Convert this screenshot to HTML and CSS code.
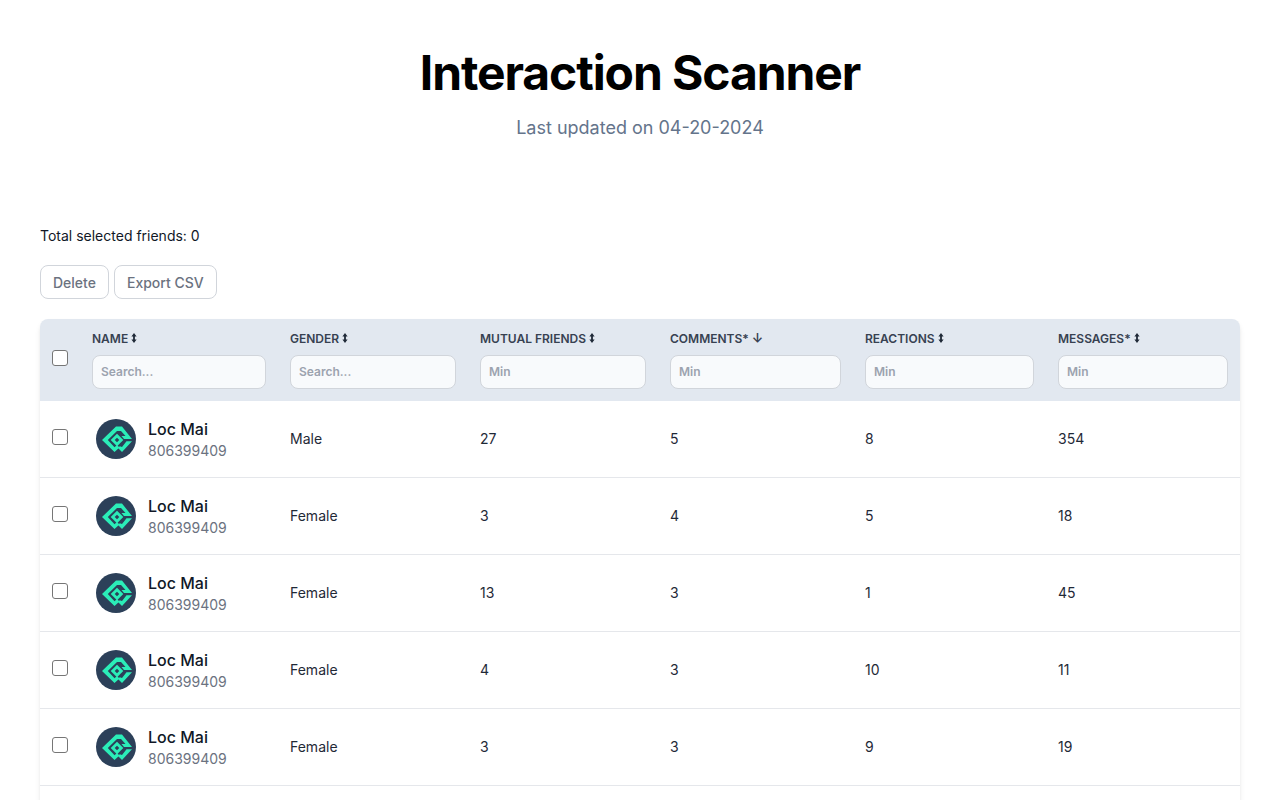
FILE: index.html
```html
<!DOCTYPE html>
<html lang="en">
<head>
	<meta charset="UTF-8">
	<title>Interaction Scanner</title>
	<link rel="stylesheet" href="styles.css">
</head>
<body>
	<svg class="defs" width="0" height="0" aria-hidden="true">
		<symbol id="logo" viewBox="0 0 40 40">
			<circle cx="20" cy="20" r="20" fill="#2c4059"/>
			<g fill="#2bedb8">
				<path d="M20 7.500L6 21L18.500 33L23.500 28.500L21 26L18.500 28.300L11.800 21L21 12H25L29.500 17H25.500L28 20H36L26 7.500Z"/>
				<path d="M30.500 22.300H36L26 33L22 29L23.800 27.300L26 28Z"/>
				<path d="M21 14.700L27.300 21L21 27.300L14.700 21ZM21 18.700L18.700 21L21 23.300L23.300 21Z" fill-rule="evenodd"/>
			</g>
		</symbol>
		<symbol id="sort" viewBox="0 0 6 10">
			<path d="M3 0L5.600 3.400H3.900V6.600H5.600L3 10L.4 6.600H2.100V3.400H.4Z" fill="#1f2937"/>
		</symbol>
	</svg>

	<header class="top">
		<h1>Interaction Scanner</h1>
		<p>Last updated on 04-20-2024</p>
	</header>

	<main class="page">
		<div class="total">Total selected friends: 0</div>
		<div class="actions">
			<button class="btn">Delete</button>
			<button class="btn">Export CSV</button>
		</div>

		<table class="friends">
			<colgroup>
				<col class="c-check"><col class="c-name"><col class="c-gender"><col class="c-mutual"><col class="c-comments"><col class="c-reactions"><col class="c-messages">
			</colgroup>
			<thead>
				<tr>
					<th class="check"><input type="checkbox"></th>
					<th><div class="label">NAME <svg class="sort"><use href="#sort"/></svg></div><input class="filter" placeholder="Search..."></th>
					<th><div class="label">GENDER <svg class="sort"><use href="#sort"/></svg></div><input class="filter" placeholder="Search..."></th>
					<th><div class="label">MUTUAL FRIENDS <svg class="sort"><use href="#sort"/></svg></div><input class="filter" placeholder="Min"></th>
					<th><div class="label">COMMENTS* <span class="arrow">↓</span></div><input class="filter" placeholder="Min"></th>
					<th><div class="label">REACTIONS <svg class="sort"><use href="#sort"/></svg></div><input class="filter" placeholder="Min"></th>
					<th><div class="label">MESSAGES* <svg class="sort"><use href="#sort"/></svg></div><input class="filter" placeholder="Min"></th>
				</tr>
			</thead>
			<tbody>
				<tr>
					<td class="check"><input type="checkbox"></td>
					<td><div class="person"><svg class="avatar"><use href="#logo"/></svg><div><div class="who">Loc Mai</div><div class="uid">806399409</div></div></div></td>
					<td>Male</td><td>27</td><td>5</td><td>8</td><td>354</td>
				</tr>
				<tr>
					<td class="check"><input type="checkbox"></td>
					<td><div class="person"><svg class="avatar"><use href="#logo"/></svg><div><div class="who">Loc Mai</div><div class="uid">806399409</div></div></div></td>
					<td>Female</td><td>3</td><td>4</td><td>5</td><td>18</td>
				</tr>
				<tr>
					<td class="check"><input type="checkbox"></td>
					<td><div class="person"><svg class="avatar"><use href="#logo"/></svg><div><div class="who">Loc Mai</div><div class="uid">806399409</div></div></div></td>
					<td>Female</td><td>13</td><td>3</td><td>1</td><td>45</td>
				</tr>
				<tr>
					<td class="check"><input type="checkbox"></td>
					<td><div class="person"><svg class="avatar"><use href="#logo"/></svg><div><div class="who">Loc Mai</div><div class="uid">806399409</div></div></div></td>
					<td>Female</td><td>4</td><td>3</td><td>10</td><td>11</td>
				</tr>
				<tr>
					<td class="check"><input type="checkbox"></td>
					<td><div class="person"><svg class="avatar"><use href="#logo"/></svg><div><div class="who">Loc Mai</div><div class="uid">806399409</div></div></div></td>
					<td>Female</td><td>3</td><td>3</td><td>9</td><td>19</td>
				</tr>
				<tr>
					<td colspan="7"></td>
				</tr>
			</tbody>
		</table>
	</main>
</body>
</html>
```

FILE: styles.css
```css
body{
	margin:0;
	font-family:Inter,"Liberation Sans",sans-serif;
	color:#1f2937;
	background:#fff;
}
.defs{
	position:absolute;
}
.top{
	padding-top:49px;
	text-align:center;
}
.top h1{
	margin:0;
	font-size:48px;
	line-height:48px;
	font-weight:700;
	letter-spacing:-1.100px;
	color:#000;
}
.top p{
	margin:17px 0 0;
	font-size:18px;
	line-height:28px;
	color:#64748b;
}
.page{
	padding:84px 40px 0;
}
.total{
	font-size:14px;
	line-height:20px;
	color:#111827;
}
.actions{
	display:flex;
	gap:5px;
	margin-top:19px;
}
.btn{
	height:34px;
	padding:0 12px;
	border:1px solid #d1d5db;
	border-radius:8px;
	background:#fff;
	font-family:inherit;
	font-size:14px;
	font-weight:500;
	color:#6b7280;
}
.friends{
	width:1200px;
	margin-top:20px;
	table-layout:fixed;
	border-collapse:separate;
	border-spacing:0;
	font-size:14px;
	box-shadow:0 4px 6px -1px rgba(0,0,0,.1),0 2px 4px -2px rgba(0,0,0,.1);
	border-radius:8px 8px 0 0;
}
.c-check{width:40px;}
.c-name{width:198px;}
.c-gender{width:190px;}
.c-mutual{width:190px;}
.c-comments{width:195px;}
.c-reactions{width:193px;}
.c-messages{width:194px;}
.friends th{
	height:82px;
	padding:0 12px;
	box-sizing:border-box;
	background:#e2e8f0;
	text-align:left;
	vertical-align:top;
}
.friends th:first-child{border-radius:8px 0 0 0;}
.friends th:last-child{border-radius:0 8px 0 0;}
.label{
	display:flex;
	align-items:center;
	gap:3px;
	height:16px;
	margin-top:11px;
	font-size:12px;
	font-weight:600;
	color:#374151;
	white-space:nowrap;
}
.sort{
	width:6px;
	height:10px;
}
.arrow{
	font-size:13px;
}
.filter{
	display:block;
	box-sizing:border-box;
	width:100%;
	height:34px;
	margin-top:9px;
	padding:0 8px 2px;
	border:1px solid #d1d5db;
	border-radius:8px;
	background:#f8fafc;
	font-family:inherit;
	font-size:12px;
	font-weight:600;
}
.filter::placeholder{
	color:#9ca3af;
}
.friends th.check{
	vertical-align:middle;
	padding:0 0 4px 12px;
}
input[type=checkbox]{
	display:block;
	appearance:none;
	box-sizing:border-box;
	width:16px;
	height:16px;
	margin:0;
	border:1px solid #767676;
	border-radius:3px;
	background:#fff;
}
.friends td{
	height:77px;
	padding:0 12px;
	box-sizing:border-box;
	border-bottom:1px solid #e5e7eb;
	background:#fff;
	line-height:20px;
}
.friends td.check{
	padding-bottom:5px;
}
.person{
	display:flex;
	align-items:center;
	gap:12px;
	padding-left:4px;
}
.avatar{
	width:40px;
	height:40px;
	flex:none;
}
.who{
	font-size:16px;
	line-height:22px;
	font-weight:500;
	color:#111827;
}
.uid{
	margin-top:1px;
	font-size:14px;
	line-height:20px;
	color:#6b7280;
}
```
